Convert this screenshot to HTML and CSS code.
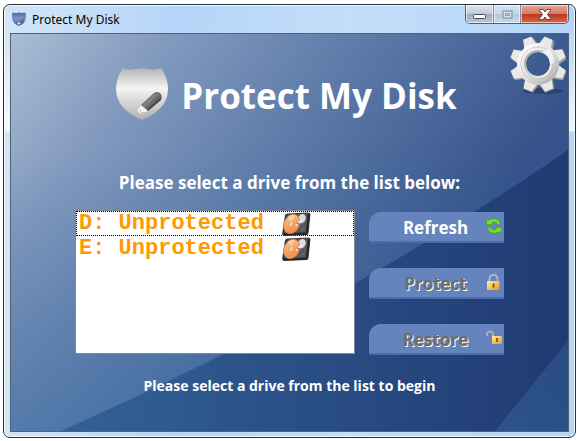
FILE: index.html
```html
<!DOCTYPE html>
<html lang="en">
    <head>
        <meta charset="utf-8">
        <title>Protect My Disk</title>
        <link rel="stylesheet" href="styles.css">
    </head>
    <body>
        <!-- shared gradients and symbols -->
        <svg class="defs" width="0" height="0" aria-hidden="true">
            <defs>
                <linearGradient id="gold" x1="0" y1="0" x2="1" y2="1">
                    <stop offset="0" stop-color="#fff0b0"/>
                    <stop offset="0.45" stop-color="#f8c860"/>
                    <stop offset="1" stop-color="#e09a24"/>
                </linearGradient>
                <linearGradient id="platter" x1="0" y1="0" x2="1" y2="1">
                    <stop offset="0" stop-color="#ffc58c"/>
                    <stop offset="1" stop-color="#ec8440"/>
                </linearGradient>
                <linearGradient id="silver" x1="0" y1="0" x2="0" y2="1">
                    <stop offset="0" stop-color="#b4b4b4"/>
                    <stop offset="0.4" stop-color="#f4f4f4"/>
                    <stop offset="0.5" stop-color="#e8e8e8"/>
                    <stop offset="1" stop-color="#b0b0b0"/>
                </linearGradient>
                <linearGradient id="blue" x1="0" y1="0" x2="0" y2="1">
                    <stop offset="0" stop-color="#4e68a8"/>
                    <stop offset="0.45" stop-color="#7d95cc"/>
                    <stop offset="1" stop-color="#4c66a4"/>
                </linearGradient>
                <linearGradient id="metal" x1="0" y1="0" x2="1" y2="1">
                    <stop offset="0" stop-color="#ffffff"/>
                    <stop offset="0.55" stop-color="#dedede"/>
                    <stop offset="1" stop-color="#acacac"/>
                </linearGradient>
                <linearGradient id="rim" x1="0" y1="0" x2="1" y2="1">
                    <stop offset="0" stop-color="#9d9d9d"/>
                    <stop offset="1" stop-color="#ffffff"/>
                </linearGradient>
            </defs>
            <symbol id="stick" viewBox="0 0 52 52">
                <path d="M25 37l13-12q3-2 6 0 3 3 1 7L32 43z" fill="#6a6a6a"/>
                <path d="M26 37l12-11q3-1 5 0L29 39z" fill="#828282"/>
                <path d="M45 32L32 43l-1-2 14-12z" fill="#4c4c4c"/>
                <path d="M21 42l4-5 7 6-6 3q-4 0-5-4z" fill="#f4f4f4" stroke="#b4b4b4" stroke-width="0.6"/>
                <path d="M24 42l1 1M26 44l1 1" stroke="#777" stroke-width="1"/>
            </symbol>
            <symbol id="disk" viewBox="0 0 30 25">
                <path d="M6 1.500L27 .5q3 0 3 2L28 22q0 2-2 2L3 25q-2 0-2.500-2L3.500 3.500q.5-2 2.500-2z" fill="#3f3f41"/>
                <path d="M7 2.500l20-1-2 19.500-22 1z" fill="#58585a"/>
                <path d="M28 1.500l1.500 1L27.500 22l-2-1z" fill="#232325"/>
                <path d="M1 22.500l25-1v2L2 24.500z" fill="#242426"/>
                <ellipse cx="21" cy="7" rx="4" ry="5" transform="rotate(25 21 7)" fill="#dcdce0"/>
                <ellipse cx="10.500" cy="12.500" rx="8" ry="10.500" transform="rotate(25 10.500 12.500)" fill="url(#platter)" stroke="#c37a45" stroke-width="0.600"/>
                <path d="M10 12L6 5q4-3 8-2z" fill="#ffe0c0" opacity="0.5"/>
                <ellipse cx="10" cy="12.500" rx="2" ry="3" transform="rotate(25 10 12.500)" fill="#f3d2a8" stroke="#cc9058" stroke-width="0.600"/>
                <path d="M21 8l-6 6" stroke="#f4f4f4" stroke-width="1.600"/>
                <path d="M16 11l2 2" stroke="#c3452b" stroke-width="1.200"/>
                <path d="M20 19l4-2" stroke="#78787b" stroke-width="1"/>
            </symbol>
        </svg>

        <div class="window">
            <div class="titlebar">
                <svg class="titleIcon" viewBox="0 0 52 52" aria-hidden="true">
                    <path d="M2 2Q15 5 26 2q11 3 24 0 2 8 2 18 0 22-26 32Q0 42 0 20 0 10 2 2z" fill="url(#blue)"/>
                    <use href="#stick"/>
                </svg>
                <span class="title">Protect My Disk</span>
                <div class="controls">
                    <button class="control minimize" type="button" aria-label="Minimize">
                        <svg width="13" height="5"><rect x="0.500" y="0.500" width="12" height="4" rx="1" fill="#fff" stroke="#4d4d59"/></svg>
                    </button>
                    <button class="control maximize" type="button" aria-label="Maximize" disabled>
                        <svg width="11" height="9"><rect x="1" y="1" width="9" height="7" fill="#dbe4ec" stroke="#92a1af" stroke-width="1.500"/><rect x="3.500" y="3.500" width="4" height="2" fill="#b9cbdb" stroke="#92a1af"/></svg>
                    </button>
                    <button class="control close" type="button" aria-label="Close">
                        <svg width="12" height="11"><path d="M.5.5h3.700L6 3 7.800.5h3.700v1L8.500 5.500l3 4v1H7.800L6 8 4.200 10.500H.5v-1l3-4-3-4z" fill="#fff" stroke="#4f4750"/></svg>
                    </button>
                </div>
            </div>

            <div class="client">
                <svg class="backdrop" viewBox="0 0 557 397" preserveAspectRatio="none" aria-hidden="true">
                    <defs>
                        <linearGradient id="sky" gradientUnits="userSpaceOnUse" x1="0" y1="0" x2="390" y2="290">
                            <stop offset="0" stop-color="#a9bdd4"/>
                            <stop offset="0.25" stop-color="#849bbf"/>
                            <stop offset="0.6" stop-color="#5b7aa8"/>
                            <stop offset="1" stop-color="#35538a"/>
                        </linearGradient>
                        <linearGradient id="haze" x1="0" y1="0" x2="0" y2="1">
                            <stop offset="0.3" stop-color="#3d6fa5" stop-opacity="0"/>
                            <stop offset="1" stop-color="#3d6fa5" stop-opacity="0.45"/>
                        </linearGradient>
                        <linearGradient id="deep" x1="0" y1="0" x2="1" y2="0">
                            <stop offset="0" stop-color="#346198"/>
                            <stop offset="0.4" stop-color="#2b5288"/>
                            <stop offset="1" stop-color="#203a72"/>
                        </linearGradient>
                        <linearGradient id="corner" x1="0" y1="1" x2="1" y2="0">
                            <stop offset="0" stop-color="#2d548a"/>
                            <stop offset="1" stop-color="#294c81"/>
                        </linearGradient>
                    </defs>
                    <rect width="557" height="397" fill="url(#sky)"/>
                    <rect width="557" height="397" fill="url(#haze)"/>
                    <path d="M50 397Q330 273 557 116V397z" fill="url(#deep)"/>
                    <path d="M484 397L557 307V397z" fill="url(#corner)"/>
                </svg>

                <div class="header">
                    <h1 class="brand">
                        <svg class="shield" viewBox="0 0 52 52" aria-hidden="true">
                            <path d="M7 0Q12 3 19 1 23 1 26 0q3 1 7 1 7 2 12-1 7 10 7 21 0 20-26 31Q0 41 0 21 0 10 7 0z" fill="url(#silver)"/>
                            <use href="#stick"/>
                        </svg>
                        <span>Protect My Disk</span>
                    </h1>
                    <button class="settings" type="button" aria-label="Settings">
                        <svg viewBox="0 0 56 58" width="56" height="58">
                            <ellipse cx="33" cy="55" rx="20" ry="3" fill="#1d2c4e" opacity="0.5"/>
                            <g fill="#9a9a9a" transform="translate(1 1)">
                                <path id="tooth" d="M20 13L23 0h10l3 13z" transform="rotate(22.500 28 28)"/>
                                <use href="#tooth" transform="rotate(45 28 28)"/>
                                <use href="#tooth" transform="rotate(90 28 28)"/>
                                <use href="#tooth" transform="rotate(135 28 28)"/>
                                <use href="#tooth" transform="rotate(180 28 28)"/>
                                <use href="#tooth" transform="rotate(225 28 28)"/>
                                <use href="#tooth" transform="rotate(270 28 28)"/>
                                <use href="#tooth" transform="rotate(315 28 28)"/>
                            </g>
                            <g fill="#e8e8e8">
                                <path id="face" d="M20 13L23.500 0h8.500L35 13z" transform="rotate(22.500 28 28)"/>
                                <use href="#face" transform="rotate(45 28 28)"/>
                                <use href="#face" transform="rotate(90 28 28)"/>
                                <use href="#face" transform="rotate(135 28 28)"/>
                                <use href="#face" transform="rotate(180 28 28)"/>
                                <use href="#face" transform="rotate(225 28 28)"/>
                                <use href="#face" transform="rotate(270 28 28)"/>
                                <use href="#face" transform="rotate(315 28 28)"/>
                            </g>
                            <circle cx="28" cy="28" r="16.500" fill="none" stroke="url(#metal)" stroke-width="9"/>
                            <circle cx="28" cy="28" r="17" fill="none" stroke="#cecece"/>
                            <circle cx="28" cy="28" r="13" fill="none" stroke="url(#rim)" stroke-width="2"/>
                            <path d="M32 16l7-3q6 6 5 14l-4 1q0-8-8-12z" fill="#fff" opacity="0.6"/>
                        </svg>
                    </button>
                </div>

                <p class="prompt" id="prompt">Please select a drive from the list below:</p>

                <div class="main">
                    <div class="drives" role="radiogroup" aria-labelledby="prompt">
                        <label class="drive">
                            <input type="radio" name="drive" value="D" autofocus>
                            <span>D: Unprotected</span>
                            <svg class="disk" aria-hidden="true"><use href="#disk"/></svg>
                        </label>
                        <label class="drive">
                            <input type="radio" name="drive" value="E">
                            <span>E: Unprotected</span>
                            <svg class="disk" aria-hidden="true"><use href="#disk"/></svg>
                        </label>
                    </div>

                    <div class="actions">
                        <button class="action" type="button">
                            <span>Refresh</span>
                            <svg viewBox="0 0 16 16" aria-hidden="true">
                                <path d="M.5 1l2 1.500Q8-1 13 2.500q1 2 1 4h-3q0-2-2-2.500-2-.3-3.500 1L7.500 6.500H.5z" fill="#72e324" stroke="#3fa30d" stroke-width="0.600"/>
                                <path d="M15.500 15l-2-1.500Q8 17 3 13.500q-1-2-1-4h3q0 2 2 2.500 2 .3 3.500-1L8.500 9.500h7z" fill="#72e324" stroke="#3fa30d" stroke-width="0.600"/>
                            </svg>
                        </button>
                        <button class="action" type="button" disabled>
                            <span>Protect</span>
                            <svg viewBox="0 0 16 16" aria-hidden="true">
                                <path d="M3.500 8V5Q3.500 1 7.500 1t4 4v3" fill="none" stroke="#c3c3bd" stroke-width="1.600"/>
                                <rect x="1" y="7" width="12.500" height="9" rx="1" fill="url(#gold)"/>
                                <path d="M7.500 9.500v4" stroke="#815013" stroke-width="1.800"/>
                            </svg>
                        </button>
                        <button class="action" type="button" disabled>
                            <span>Restore</span>
                            <svg viewBox="0 0 16 16" aria-hidden="true">
                                <path d="M1 6V4Q1 1.500 4 1.500t3 3V7" fill="none" stroke="#c3b9a0" stroke-width="1.500"/>
                                <rect x="6" y="6" width="10" height="8" rx="1" fill="url(#gold)"/>
                                <path d="M11 8v4" stroke="#815013" stroke-width="1.800"/>
                            </svg>
                        </button>
                    </div>
                </div>

                <p class="status">Please select a drive from the list to begin</p>
            </div>
        </div>
    </body>
</html>
```

FILE: styles.css
```css
* {
    box-sizing: border-box;
}

body {
    background-color: #fff;
    padding: 4px 2px 3px 3px;
    margin: 0;
    min-height: 100vh;
    display: flex;
    font-family: "Open Sans", "Noto Sans", sans-serif;
}

button {
    margin: 0;
    padding: 0;
    border: 0;
    background: none;
    font-family: inherit;
}

.defs {
    position: absolute;
}

.window {
    flex: 1;
    display: flex;
    flex-direction: column;
    padding: 0 6px 5px;
    border: 1px solid #26323c;
    border-radius: 7px;
    box-shadow: inset 0 0 0 1px #f2f9ff;
    background:
        linear-gradient(to bottom, rgba(255, 255, 255, 0) 24px, rgba(255, 255, 255, 0.8) 126px, rgba(255, 255, 255, 0) 127px),
        linear-gradient(to right, #d3e5f5, #b5d5f8 30%, #c2def8 60%, #b5d5f8);
}

.titlebar {
    display: flex;
    align-items: center;
    height: 28px;
    padding-left: 2px;
}

.titleIcon {
    width: 14px;
    height: 14px;
    margin-right: 6px;
}

.title {
    font-family: "Noto Sans", "Open Sans", sans-serif;
    font-size: 12px;
    color: #000;
}

.controls {
    display: flex;
    align-self: flex-start;
    margin-left: auto;
    border: 1px solid #55606c;
    border-top: 0;
    border-radius: 0 0 5px 5px;
    overflow: hidden;
}

.control {
    display: flex;
    align-items: center;
    justify-content: center;
    width: 27px;
    height: 18px;
    border-right: 1px solid #7f8b98;
    box-shadow: inset 0 0 0 1px rgba(255, 255, 255, 0.6);
    background: linear-gradient(#dfe6ee, #c3ccd6 48%, #9ca9b8 50%, #bcc9d8);
}

.minimize {
    width: 28px;
    padding-top: 4px;
}

.maximize {
    background: linear-gradient(#d5e3f1, #c5d7e8 48%, #b4c9de 50%, #c6d9eb);
}

.close {
    width: 47px;
    border-right: 0;
    background: linear-gradient(#e6a795, #d67b67 48%, #bc3420 50%, #d8674a);
}

.client {
    flex: 1;
    position: relative;
    z-index: 0;
    border: 1px solid #55616f;
    color: #fff;
}

.backdrop {
    position: absolute;
    z-index: -1;
    width: 100%;
    height: 100%;
}

.header {
    display: grid;
    grid-template-columns: 1fr auto 1fr;
    align-items: start;
}

.brand {
    grid-column: 2;
    display: flex;
    align-items: flex-start;
    gap: 13px;
    margin: 34px 6px 0 0;
    font-size: 35px;
    line-height: 56px;
    font-weight: 700;
}

.shield {
    width: 52px;
    height: 52px;
}

.settings {
    justify-self: end;
    margin: 2px 2px 0 0;
}

.settings svg {
    display: block;
}

.prompt {
    margin: 47px 0 15px;
    font-size: 17px;
    line-height: 24px;
    font-weight: 700;
    text-align: center;
}

.main {
    display: flex;
    gap: 14px;
    padding: 0 64px;
}

.drives {
    flex: 1;
    min-height: 143px;
    border: 1px solid #828790;
    background-color: #fff;
}

.drive {
    position: relative;
    display: flex;
    align-items: center;
    gap: 17px;
    height: 25px;
    padding-left: 2px;
    border: 1px solid transparent;
    font-family: "Liberation Mono", "Courier New", monospace;
    font-size: 22px;
    line-height: 23px;
    font-weight: 700;
    color: #ff9900;
}

.drive:focus-within {
    border: 1px dotted #000;
}

/* the whole row is the hit area */
.drive input {
    appearance: none;
    position: absolute;
    inset: 0;
    margin: 0;
    outline: 0;
}

.disk {
    width: 30px;
    height: 24px;
}

.actions {
    display: flex;
    flex-direction: column;
    gap: 25px;
    width: 135px;
    padding-top: 2px;
    margin-bottom: -1px;
}

.action {
    display: grid;
    grid-template-columns: 1fr auto 1fr;
    align-items: center;
    height: 31px;
    padding: 2px 2px 0 0;
    border-bottom: 2px solid #4a6cad;
    border-radius: 12px 0 0 0;
    background-color: #6583bc;
    font-size: 17px;
    font-weight: 700;
    color: #fff;
}

.action span {
    grid-column: 2;
}

.action svg {
    justify-self: end;
    width: 16px;
    height: 16px;
    margin-bottom: 4px;
}

.action:disabled {
    color: #6d6d6d;
    text-shadow: 1px 1px 0 #fff;
}

.status {
    margin: 22px 0 0;
    font-size: 14px;
    line-height: 20px;
    font-weight: 700;
    text-align: center;
}
```
